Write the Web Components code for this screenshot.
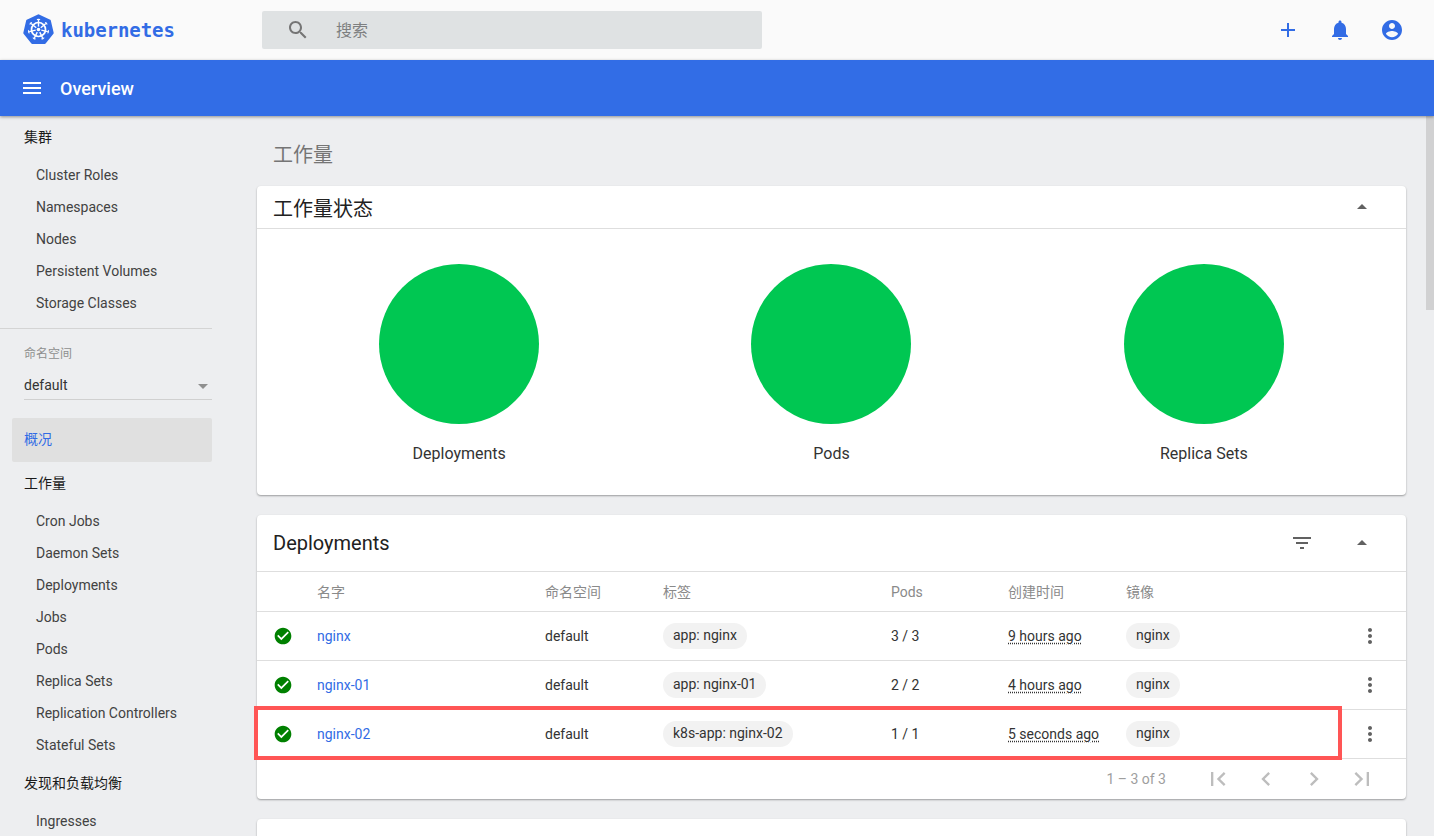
<!DOCTYPE html>
<html lang="zh">
<head>
<meta charset="utf-8">
<title>Kubernetes Dashboard</title>
<style>
html,body{margin:0;height:836px;overflow:hidden;background:#edeef0;font-family:Roboto,"Noto Sans CJK SC",sans-serif;color:#212121}
</style>
</head>
<body>
<kd-app>
  <kd-toolbar slot="top"></kd-toolbar>
  <kd-actionbar slot="top">Overview</kd-actionbar>
  <kd-sidebar slot="side">
    <kd-nav-head>集群</kd-nav-head>
    <kd-nav-item>Cluster Roles</kd-nav-item>
    <kd-nav-item>Namespaces</kd-nav-item>
    <kd-nav-item>Nodes</kd-nav-item>
    <kd-nav-item>Persistent Volumes</kd-nav-item>
    <kd-nav-item>Storage Classes</kd-nav-item>
    <kd-ns-select></kd-ns-select>
    <kd-nav-active>概况</kd-nav-active>
    <kd-nav-head>工作量</kd-nav-head>
    <kd-nav-item>Cron Jobs</kd-nav-item>
    <kd-nav-item>Daemon Sets</kd-nav-item>
    <kd-nav-item>Deployments</kd-nav-item>
    <kd-nav-item>Jobs</kd-nav-item>
    <kd-nav-item>Pods</kd-nav-item>
    <kd-nav-item>Replica Sets</kd-nav-item>
    <kd-nav-item>Replication Controllers</kd-nav-item>
    <kd-nav-item>Stateful Sets</kd-nav-item>
    <kd-nav-head style="margin-top:1px">发现和负载均衡</kd-nav-head>
    <kd-nav-item>Ingresses</kd-nav-item>
  </kd-sidebar>
  <kd-main slot="main">
    <kd-page-title>工作量</kd-page-title>
    <kd-card>
      <span slot="title">工作量状态</span>
      <kd-collapse slot="actions"></kd-collapse>
      <kd-status-charts>
        <kd-chart>Deployments</kd-chart>
        <kd-chart>Pods</kd-chart>
        <kd-chart>Replica Sets</kd-chart>
      </kd-status-charts>
    </kd-card>
    <kd-card tall>
      <span slot="title">Deployments</span>
      <kd-filter slot="actions"></kd-filter>
      <kd-collapse slot="actions"></kd-collapse>
      <kd-table>
        <kd-thead></kd-thead>
        <kd-row name="nginx" labels="app: nginx" pods="3 / 3" age="9 hours ago"></kd-row>
        <kd-row name="nginx-01" labels="app: nginx-01" pods="2 / 2" age="4 hours ago"></kd-row>
        <kd-row name="nginx-02" labels="k8s-app: nginx-02" pods="1 / 1" age="5 seconds ago"></kd-row>
        <kd-paginator></kd-paginator>
        <kd-highlight></kd-highlight>
      </kd-table>
    </kd-card>
    <kd-card stub></kd-card>
  </kd-main>
</kd-app>
<script>
const icon=(d,size=24,color='currentColor')=>`<svg width="${size}" height="${size}" viewBox="0 0 24 24" fill="${color}" style="display:block"><path d="${d}"/></svg>`;
const ICONS={
  search:'M15.5 14h-.79l-.28-.27C15.41 12.59 16 11.11 16 9.5 16 5.91 13.09 3 9.5 3S3 5.91 3 9.5 5.91 16 9.5 16c1.61 0 3.09-.59 4.23-1.57l.27.28v.79l5 4.99L20.49 19l-4.99-5zm-6 0C7.01 14 5 11.99 5 9.5S7.01 5 9.5 5 14 7.01 14 9.5 11.99 14 9.5 14z',
  add:'M19 13h-6v6h-2v-6H5v-2h6V5h2v6h6v2z',
  bell:'M12 22c1.1 0 2-.9 2-2h-4c0 1.1.89 2 2 2zm6-6v-5c0-3.07-1.64-5.64-4.5-6.32V4c0-.83-.67-1.5-1.5-1.5s-1.5.67-1.5 1.5v.68C7.63 5.36 6 7.92 6 11v5l-2 2v1h16v-1l-2-2z',
  account:'M12 2C6.48 2 2 6.48 2 12s4.48 10 10 10 10-4.48 10-10S17.52 2 12 2zm0 3c1.66 0 3 1.34 3 3s-1.34 3-3 3-3-1.34-3-3 1.34-3 3-3zm0 14.2c-2.5 0-4.71-1.28-6-3.22.03-1.99 4-3.08 6-3.08 1.99 0 5.97 1.09 6 3.08-1.29 1.94-3.5 3.22-6 3.22z',
  menu:'M3 18h18v-2H3v2zm0-5h18v-2H3v2zm0-7v2h18V6H3z',
  up:'M7 14l5-5 5 5z',
  filter:'M10 18h4v-2h-4v2zM3 6v2h18V6H3zm3 7h12v-2H6v2z',
  check:'M12 2C6.48 2 2 6.48 2 12s4.48 10 10 10 10-4.48 10-10S17.52 2 12 2zm-2 15l-5-5 1.41-1.41L10 14.17l7.59-7.59L19 8l-9 9z',
  more:'M12 8c1.1 0 2-.9 2-2s-.9-2-2-2-2 .9-2 2 .9 2 2 2zm0 2c-1.1 0-2 .9-2 2s.9 2 2 2 2-.9 2-2-.9-2-2-2zm0 6c-1.1 0-2 .9-2 2s.9 2 2 2 2-.9 2-2-.9-2-2-2z',
  first:'M18.41 16.59L13.82 12l4.59-4.59L17 6l-6 6 6 6zM6 6h2v12H6z',
  prev:'M15.41 7.41L14 6l-6 6 6 6 1.41-1.41L10.83 12z',
  next:'M10 6L8.59 7.41 13.17 12l-4.58 4.59L10 18l6-6z',
  last:'M5.59 7.41L10.18 12l-4.59 4.59L7 18l6-6-6-6zM16 6h2v12h-2z'
};
function def(name,css,html){
  customElements.define(name,class extends HTMLElement{
    constructor(){super();this.attachShadow({mode:'open'});}
    connectedCallback(){
      const h=typeof html==='function'?html(this):html;
      this.shadowRoot.innerHTML=`<style>${css}</style>${h}`;
    }
  });
}
const spokes=Array.from({length:7},(_,i)=>`<g transform="rotate(${i*360/7} 19 19.5)"><path d="M19 16.6V10" stroke="#fff" stroke-width="1.4"/><path d="M17.2 10a1.8 1.2 0 0 1 3.6 0z" fill="#fff"/></g>`).join('');
const CJK='Roboto,"Noto Sans CJK SC",sans-serif';

def('kd-app',`:host{display:flex;flex-direction:column;height:836px;overflow:hidden;position:relative}
.body{display:flex;flex:1;min-height:0;overflow:hidden;position:relative}
.thumb{position:absolute;right:0;top:0;width:8px;height:194px;background:#d1d1d2}`,
`<slot name="top"></slot><div class="body"><slot name="side"></slot><slot name="main"></slot><div class="thumb"></div></div>`);

def('kd-toolbar',`:host{display:flex;align-items:center;height:60px;background:#fafafa;flex:none}
.logo{display:flex;align-items:center;width:262px;box-sizing:border-box;padding-left:24px}
.logo span{font:700 19px "DejaVu Sans Mono","Liberation Mono",monospace;color:#326ce5;margin-left:3px;letter-spacing:-.05px}
.search{display:flex;align-items:center;width:500px;height:38px;background:#dfe2e3;border-radius:2px;color:#757575;box-sizing:border-box;padding-left:24px}
.search span{font:16px ${CJK};margin-left:26px;color:#7d7f80;padding-bottom:2px}
.acts{margin-left:auto;display:flex;gap:28px;padding-right:30px;color:#326ce5}`,
`<div class="logo"><svg width="39" height="39" viewBox="0 0 38 39" style="display:block;margin:0 0 2px -5px"><path d="M19 5.5 30.2 10.9 33 23 25.2 32.7H12.8L5 23 7.8 10.9Z" fill="#326ce5" stroke="#326ce5" stroke-width="2.4" stroke-linejoin="round"/><circle cx="19" cy="19.5" r="7" fill="none" stroke="#fff" stroke-width="1.7"/>${spokes}<circle cx="19" cy="19.5" r="1.8" fill="#fff"/></svg><span>kubernetes</span></div>
<div class="search">${icon(ICONS.search)}<span>搜索</span></div>
<div class="acts">${icon(ICONS.add)}${icon(ICONS.bell)}${icon(ICONS.account)}</div>`);

def('kd-actionbar',`:host{display:flex;align-items:center;height:56px;background:#326de6;color:#fff;flex:none;padding-left:20px;box-shadow:0 1px 3px rgba(0,0,0,.4);position:relative;z-index:2}
b{font:500 18px Roboto,sans-serif;margin-left:16px}`,
`${icon(ICONS.menu)}<b><slot></slot></b>`);

def('kd-sidebar',`:host{display:block;width:212px;flex:none;overflow:hidden;font:14px ${CJK}}`,`<slot></slot>`);
def('kd-nav-head',`:host{display:block;height:43px;padding-left:24px;font:14px/42px ${CJK};color:#1a1a1a;box-sizing:border-box}`,`<slot></slot>`);
def('kd-nav-item',`:host{display:block;height:32px;padding-left:36px;font:14px/32px ${CJK};color:#424242}`,`<slot></slot>`);
def('kd-nav-active',`:host{display:block;height:44px;margin-left:12px;padding-left:12px;background:#e0e0e0;border-radius:2px;color:#326ce5;font:14px/42px ${CJK}}`,`<slot></slot>`);
def('kd-ns-select',`:host{display:block;margin-top:9px;border-top:1px solid #d4d4d4;padding:16px 0 18px 24px;font:14px ${CJK}}
.l{font-size:12px;line-height:18px;color:#8e8e8e}
.s{display:flex;align-items:center;justify-content:space-between;height:30px;margin-top:7px;border-bottom:1px solid #d0d0d0;box-sizing:border-box;color:#333}
.s i{width:0;height:0;border:5px solid transparent;border-top-color:#8f8f8f;border-bottom:0;margin-right:4px;margin-top:3px}`,
`<div class="l">命名空间</div><div class="s"><span>default</span><i></i></div>`);

def('kd-main',`:host{display:block;flex:1;min-width:0;padding:18px 28px 0 45px;overflow:hidden}`,`<slot></slot>`);
def('kd-page-title',`:host{display:block;font:20px/42px ${CJK};color:#757575;padding-left:16px;margin-bottom:10px}`,`<slot></slot>`);
def('kd-card',`:host{display:block;background:#fff;border-radius:4px;box-shadow:0 1px 2px rgba(0,0,0,.35);margin-bottom:20px;position:relative}
:host([stub]){height:60px}
.h{display:flex;align-items:center;height:42px;padding:0 32px 0 16px;border-bottom:1px solid #dedede;font:20px ${CJK};color:#212121}
:host([tall]) .h{height:56px}
:host([stub]) .h{display:none}
.a{margin-left:auto;display:flex;align-items:center;gap:36px;color:#616161}`,
`<div class="h"><slot name="title"></slot><div class="a"><slot name="actions"></slot></div></div><slot></slot>`);
def('kd-collapse',`:host{display:block;color:#616161}`,()=>icon(ICONS.up));
def('kd-filter',`:host{display:block;color:#616161}`,()=>icon(ICONS.filter));

def('kd-status-charts',`:host{display:grid;grid-template-columns:repeat(3,1fr);height:266px;box-sizing:border-box;padding:35px 16px 0 16px}`,`<slot></slot>`);
def('kd-chart',`:host{display:flex;flex-direction:column;align-items:center;font:16px Roboto,sans-serif;color:#333}
.c{width:160px;height:160px;border-radius:50%;background:#00c752}
.t{margin-top:20px;line-height:20px}`,`<div class="c"></div><div class="t"><slot></slot></div>`);

def('kd-table',`:host{display:block;position:relative}`,`<slot></slot>`);
const GRID='display:grid;grid-template-columns:60px 228px 118px 228px 117px 118px 1fr 72px;align-items:center;';
def('kd-thead',`:host{${GRID}height:40px;border-bottom:1px solid #dedede;font:14px ${CJK};color:#8a8a8a;box-sizing:border-box}
.c{padding-bottom:2px}`,
`<span></span><span class="c">名字</span><span class="c">命名空间</span><span class="c">标签</span><span>Pods</span><span class="c">创建时间</span><span class="c">镜像</span><span></span>`);
def('kd-row',`:host{${GRID}height:49px;border-bottom:1px solid #dedede;font:14px Roboto,sans-serif;color:#333;box-sizing:border-box}
.i{padding-left:16px;color:#008000;display:flex}
a{color:#326ce5;text-decoration:none}
.chip{display:inline-block;background:#f2f2f2;border-radius:13px;height:26px;line-height:25px;padding:0 10px}
u{text-decoration:underline dotted;text-underline-offset:2px}
.m{display:flex;justify-content:center;color:#616161}`,
el=>`<div class="i">${icon(ICONS.check,20)}</div><a href="#">${el.getAttribute('name')}</a><span>default</span><span><span class="chip">${el.getAttribute('labels')}</span></span><span>${el.getAttribute('pods')}</span><span><u>${el.getAttribute('age')}</u></span><span><span class="chip">nginx</span></span><div class="m">${icon(ICONS.more)}</div>`);
def('kd-paginator',`:host{display:flex;align-items:center;justify-content:flex-end;height:40px;padding-right:30px;color:#bdbdbd;font:14px Roboto,sans-serif}
span{color:#9e9e9e;margin-right:38px}
div{display:flex;gap:20px}`,
()=>`<span>1 – 3 of 3</span><div>${icon(ICONS.first,28)}${icon(ICONS.prev,28)}${icon(ICONS.next,28)}${icon(ICONS.last,28)}</div>`);
def('kd-highlight',`:host{position:absolute;left:-3px;top:134px;width:1088px;height:54px;border:4px solid #ff5555;box-sizing:border-box;pointer-events:none}`,``);
</script>
</body>
</html>
